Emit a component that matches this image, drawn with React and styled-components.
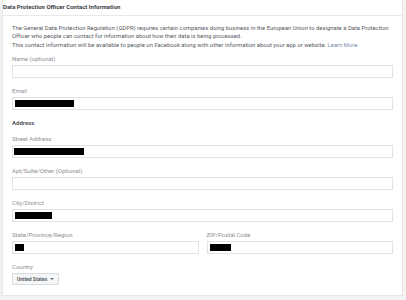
import styled, { createGlobalStyle } from "styled-components";

const GlobalStyle = createGlobalStyle`
  body {
    margin: 0;
    background: #f2f2f2;
    font-family: Roboto, "Liberation Sans", sans-serif;
  }
`;

const Card = styled.section`
  margin-left: 2px;
  width: 401px;
  height: 296px;
  box-sizing: border-box;
  background: #fff;
  border: 1px solid #e6e6e6;
  border-top: none;
`;

const CardHeader = styled.header`
  height: 16px;
  box-sizing: border-box;
  border-bottom: 1px solid #e7e9ec;
  font-size: 6px;
  font-weight: 700;
  line-height: 14px;
  color: #3b3e44;
`;

const CardBody = styled.div`
  padding: 8px 9px 0;
`;

const Intro = styled.p`
  margin: 0 0 ${(p) => p.$gap || 0}px;
  font-size: 5.8px;
  letter-spacing: 0.04px;
  line-height: 8px;
  color: #55585e;
`;

const LearnMore = styled.a`
  color: #7b8bb0;
  text-decoration: none;
`;

const Field = styled.div`
  margin-bottom: 9px;
`;

const Label = styled.div`
  font-size: 6px;
  line-height: 8px;
  color: #8d9096;
  margin-bottom: 2px;
`;

const TextBox = styled.div`
  height: 13px;
  box-sizing: border-box;
  border: 1px solid #e1e3e6;
  display: flex;
  align-items: center;
  padding-left: ${(p) => p.$inset ?? 2}px;
`;

const Redacted = styled.span`
  display: block;
  width: ${(p) => p.$w}px;
  height: 7px;
  background: #000;
`;

const SectionTitle = styled.div`
  margin: 2px 0 8px;
  font-size: 6px;
  font-weight: 700;
  line-height: 8px;
  color: #55585e;
`;

const Row = styled.div`
  display: grid;
  grid-template-columns: 1fr 1fr;
  column-gap: 8px;
`;

const Dropdown = styled.button`
  display: flex;
  width: max-content;
  height: 12px;
  margin-top: 1px;
  padding: 0 4px;
  align-items: center;
  gap: 3px;
  background: #f5f6f7;
  border: 1px solid #d8dbe0;
  border-radius: 1px;
  font-family: inherit;
  font-size: 5px;
  font-weight: 700;
  line-height: 10px;
  color: #5a5e66;
`;

const Caret = styled.span`
  width: 0;
  height: 0;
  border-left: 2px solid transparent;
  border-right: 2px solid transparent;
  border-top: 2px solid #6b6f76;
`;

export default function App() {
  return (
    <>
      <GlobalStyle />
      <Card>
        <CardHeader>Data Protection Officer Contact Information</CardHeader>
        <CardBody>
          <Intro $gap={1}>
            The General Data Protection Regulation (GDPR) requires certain
            companies doing business in the European Union to designate a Data
            Protection Officer who people can contact for information about how
            their data is being processed.
          </Intro>
          <Intro $gap={6}>
            This contact information will be available to people on Facebook
            along with other information about your app or website.{" "}
            <LearnMore href="#">Learn More.</LearnMore>
          </Intro>

          <Field>
            <Label>Name (optional)</Label>
            <TextBox />
          </Field>
          <Field>
            <Label>Email</Label>
            <TextBox>
              <Redacted $w={59} />
            </TextBox>
          </Field>

          <SectionTitle>Address</SectionTitle>

          <Field>
            <Label>Street Address</Label>
            <TextBox $inset={1}>
              <Redacted $w={70} />
            </TextBox>
          </Field>
          <Field>
            <Label>Apt/Suite/Other (Optional)</Label>
            <TextBox />
          </Field>
          <Field>
            <Label>City/District</Label>
            <TextBox>
              <Redacted $w={37} />
            </TextBox>
          </Field>
          <Row>
            <Field>
              <Label>State/Province/Region</Label>
              <TextBox>
                <Redacted $w={9} />
              </TextBox>
            </Field>
            <Field>
              <Label>ZIP/Postal Code</Label>
              <TextBox>
                <Redacted $w={21} />
              </TextBox>
            </Field>
          </Row>
          <Field>
            <Label>Country</Label>
            <Dropdown>
              United States <Caret />
            </Dropdown>
          </Field>
        </CardBody>
      </Card>
    </>
  );
}
